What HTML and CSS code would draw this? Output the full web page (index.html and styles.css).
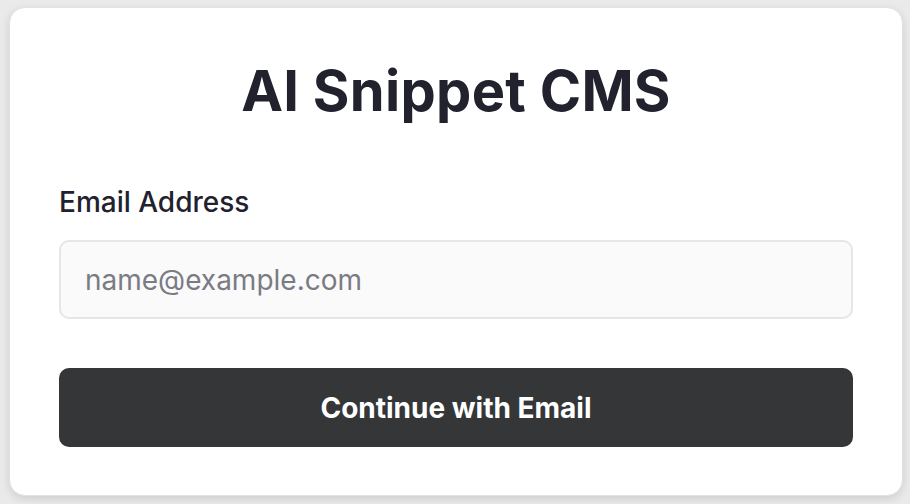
FILE: index.html
```html
<!DOCTYPE html>
<html lang="en">
<head>
<meta charset="utf-8">
<title>AI Snippet CMS</title>
<link rel="stylesheet" href="styles.css">
</head>
<body>
<main class="card">
  <h1 class="title">AI Snippet CMS</h1>
  <form class="form">
    <label class="label" for="email">Email Address</label>
    <input class="input" id="email" type="email" placeholder="name@example.com">
    <button class="button" type="button">Continue with Email</button>
  </form>
</main>
</body>
</html>
```
FILE: styles.css
```css
html, body {
  margin: 0;
  padding: 0;
}
body {
  background: #eaeaea;
  font-family: Inter, "Noto Sans", sans-serif;
  width: 910px;
  height: 504px;
  overflow: hidden;
}
.card {
  box-sizing: border-box;
  margin: 7px 0 0 9px;
  width: 894px;
  height: 489px;
  background: #ffffff;
  border: 1px solid #e2e2e6;
  border-radius: 16px;
  box-shadow: 0 3px 8px rgba(0, 0, 0, 0.12);
  padding: 47px 49px 0 49px;
}
.title {
  margin: 0;
  text-align: center;
  font-size: 56px;
  line-height: 72px;
  font-weight: 700;
  color: #22212e;
  letter-spacing: 0.3px;
}
.form {
  display: flex;
  flex-direction: column;
  margin-top: 55px;
}
.label {
  font-size: 28px;
  line-height: 40px;
  font-weight: 500;
  color: #22212e;
}
.input {
  box-sizing: border-box;
  margin-top: 18px;
  height: 79px;
  border: 2px solid #e6e6e8;
  border-radius: 10px;
  background: #fafafa;
  padding: 0 24px;
  font-family: inherit;
  font-size: 28px;
  color: #22212e;
}
.input::placeholder {
  color: #7b7b85;
}
.button {
  margin-top: 49px;
  height: 79px;
  border: none;
  border-radius: 10px;
  background: #353638;
  color: #ffffff;
  font-family: inherit;
  font-size: 28px;
  font-weight: 700;
}
```
